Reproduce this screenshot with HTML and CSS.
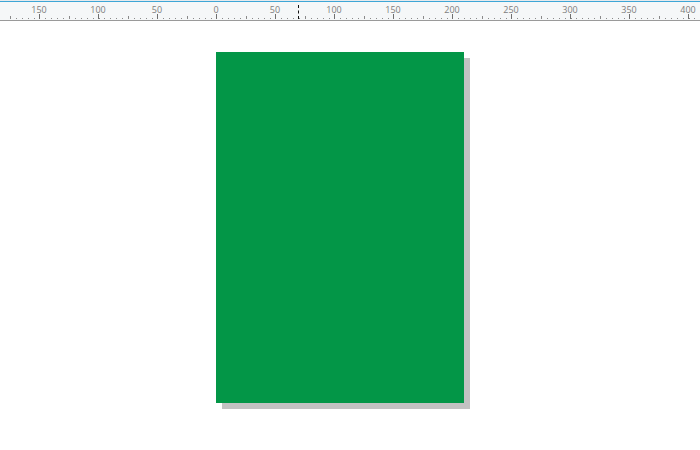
FILE: index.html
```html
<!DOCTYPE html>
<html lang="en">
<head>
    <meta charset="UTF-8">
    <title>Page</title>
    <link rel="stylesheet" href="styles.css">
</head>
<body>
    <div class="ruler">
        <div class="ruler-scale">
            <div class="mark">150</div>
            <div class="mark">100</div>
            <div class="mark">50</div>
            <div class="mark">0</div>
            <div class="mark">50</div>
            <div class="mark">100</div>
            <div class="mark">150</div>
            <div class="mark">200</div>
            <div class="mark">250</div>
            <div class="mark">300</div>
            <div class="mark">350</div>
            <div class="mark">400</div>
        </div>
        <div class="cursor-line"></div>
    </div>
    <div class="canvas">
        <div class="page"></div>
    </div>
</body>
</html>
```

FILE: styles.css
```css
body {
    margin: 0;
    min-height: 100vh;
    background-color: #ffffff;
    font-family: 'Open Sans', 'DejaVu Sans', sans-serif;
}
.ruler {
    position: relative;
    height: 19px;
    border-top: 1px solid #e6eaed;
    background-color: #f5f7f8;
    box-shadow: inset 0 1px 0 #3ea6d6;
    border-bottom: 1px solid #9a9a9a;
    overflow: hidden;
}
.ruler-scale {
    display: flex;
    margin-left: 9.5px;
    height: 19px;
}
.mark {
    position: relative;
    flex: 0 0 59px;
    text-align: center;
    font-size: 9px;
    line-height: 9px;
    padding-top: 4px;
    color: #7d7d7d;
    box-sizing: border-box;
    background-image: repeating-linear-gradient(to right, #8a8a8a 0 1px, transparent 1px 5.9px);
    background-size: 100% 1px;
    background-position: 0 17px;
    background-repeat: no-repeat;
}
.mark::after {
    content: "";
    position: absolute;
    left: 29px;
    top: 13px;
    width: 1px;
    height: 5px;
    background-color: #6f6f6f;
}
.mark::before {
    content: "";
    position: absolute;
    left: 0;
    top: 15px;
    width: 1px;
    height: 3px;
    background-color: #8a8a8a;
}
.cursor-line {
    position: absolute;
    left: 298px;
    top: 4px;
    height: 14px;
    border-left: 1px dashed #111;
}
.canvas {
    padding: 31px 0 40px 216px;
}
.page {
    width: 248px;
    height: 351px;
    background-color: #039647;
    box-shadow: 6px 6px 0 #c2c2c2;
}
```
